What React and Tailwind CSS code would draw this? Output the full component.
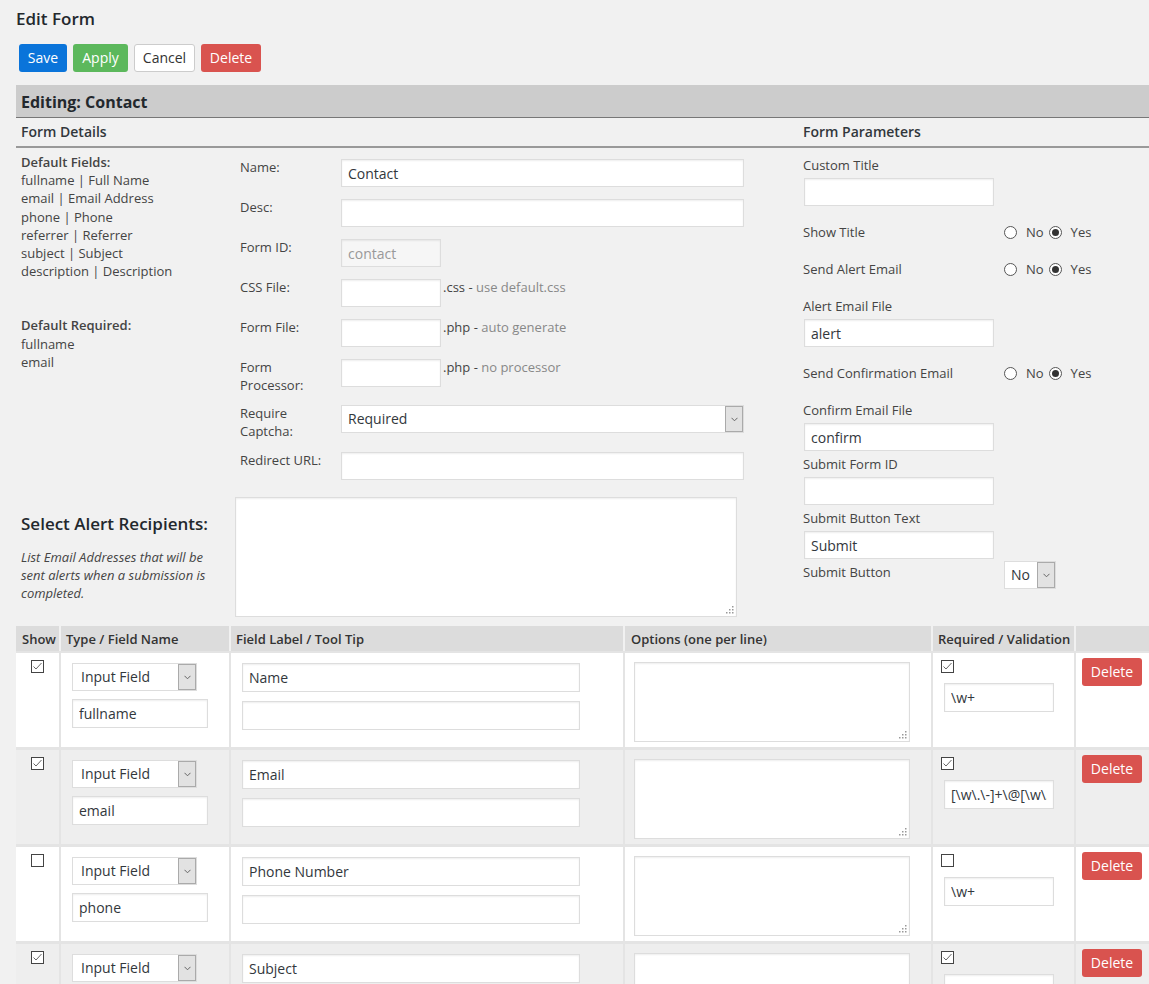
import React from "react";

function Check({ checked }) {
  return (
    <svg width="13" height="13" viewBox="0 0 13 13" className="block">
      <rect x="0.5" y="0.5" width="12" height="12" fill="#fff" stroke="#444" />
      {checked && (
        <path d="M2.5 6.5 L5 9 L10.5 3" fill="none" stroke="#666" strokeWidth="1" />
      )}
    </svg>
  );
}

function Radio({ checked }) {
  return (
    <svg width="13" height="13" viewBox="0 0 13 13" className="block">
      <circle cx="6.5" cy="6.5" r="6" fill="#fff" stroke="#555" />
      {checked && <circle cx="6.5" cy="6.5" r="3.5" fill="#333" />}
    </svg>
  );
}

function Chevron() {
  return (
    <svg width="7" height="5" viewBox="0 0 7 5" className="block">
      <path d="M0.5 0.8 L3.5 3.8 L6.5 0.8" fill="none" stroke="#666" strokeWidth="1" />
    </svg>
  );
}

function Input({ value = "", className = "", disabled = false }) {
  return (
    <input
      readOnly
      defaultValue={value}
      className={`block border border-[#dddddd] px-[6px] text-[14px] outline-none shadow-[inset_0_1px_2px_rgba(0,0,0,0.07)] ${
        disabled ? "bg-[#f6f6f6] text-[#999999]" : "bg-white text-[#32373c]"
      } ${className}`}
    />
  );
}

function Select({ value, className = "", text = "pl-[8px]" }) {
  return (
    <div className={`flex items-stretch border border-[#dddddd] bg-white ${className}`}>
      <div className={`flex flex-1 items-center ${text} text-[14px] text-[#32373c]`}>{value}</div>
      <div className="flex w-[18px] items-center justify-center border border-[#aaaaaa] bg-[#e2e2e2]">
        <Chevron />
      </div>
    </div>
  );
}

function Textarea({ className = "" }) {
  return (
    <div
      className={`relative border border-[#dddddd] bg-white shadow-[inset_0_1px_2px_rgba(0,0,0,0.07)] ${className}`}
    >
      <svg width="8" height="8" viewBox="0 0 8 8" className="absolute bottom-[2px] right-[2px]">
        <rect x="6" y="0" width="1.5" height="1.5" fill="#999" />
        <rect x="6" y="3" width="1.5" height="1.5" fill="#999" />
        <rect x="3" y="3" width="1.5" height="1.5" fill="#999" />
        <rect x="6" y="6" width="1.5" height="1.5" fill="#999" />
        <rect x="3" y="6" width="1.5" height="1.5" fill="#999" />
        <rect x="0" y="6" width="1.5" height="1.5" fill="#999" />
      </svg>
    </div>
  );
}

function FormRow({ label, h, children }) {
  return (
    <div className={`flex items-start ${h}`}>
      <div className="w-[101px] leading-[18px] -mt-[1px]">{label}</div>
      <div className="flex flex-1 items-start">{children}</div>
    </div>
  );
}

function RadioRow({ label, className = "" }) {
  return (
    <div className={`flex h-[18px] items-center ${className}`}>
      <div className="w-[201px]">{label}</div>
      <Radio />
      <span className="ml-[9px]">No</span>
      <span className="ml-[5px]">
        <Radio checked />
      </span>
      <span className="ml-[9px]">Yes</span>
    </div>
  );
}

const rows = [
  { show: true, name: "fullname", label: "Name", req: true, val: "\\w+", bg: "bg-white" },
  {
    show: true,
    name: "email",
    label: "Email",
    req: true,
    val: "[\\w\\.\\-]+\\@[\\w\\.\\-]+\\.\\w+",
    bg: "bg-[#eeeeee]",
  },
  { show: false, name: "phone", label: "Phone Number", req: false, val: "\\w+", bg: "bg-white" },
  { show: true, name: "subject", label: "Subject", req: true, val: "", bg: "bg-[#eeeeee]" },
];

export default function App() {
  return (
    <div className="min-h-screen overflow-hidden bg-[#f1f1f1] pb-6 pl-4 font-['Open_Sans',sans-serif] text-[13px] leading-[18px] text-[#444444]">
      <h1 className="pt-[7px] text-[17px] font-semibold leading-[24px] text-[#23282d]">Edit Form</h1>

      <div className="mt-[13px] flex gap-[6px] pl-[3px]">
        <button className="h-[28px] w-[48px] rounded-[3px] bg-[#0a74da] text-[14px] text-white">Save</button>
        <button className="h-[28px] w-[55px] rounded-[3px] bg-[#5cb85c] text-[14px] text-white">Apply</button>
        <button className="h-[28px] w-[61px] rounded-[3px] border border-[#cccccc] bg-white text-[14px] text-[#333]">
          Cancel
        </button>
        <button className="h-[28px] w-[60px] rounded-[3px] bg-[#d9534f] text-[14px] text-white">Delete</button>
      </div>

      <div className="mt-[13px] flex h-[33px] items-center border-b border-[#777777] bg-[#cccccc] pl-[5px] pt-[2px]">
        <span className="text-[16px] font-bold text-[#23282d]">Editing: Contact</span>
      </div>

      <div className="flex">
        {/* LEFT */}
        <div className="w-[764px]">
          <div className="flex h-[30px] items-center border-b-2 border-[#999999] pl-[5px] text-[14px] font-semibold text-[#32373c]">
            Form Details
          </div>
          <div className="flex">
            <div className="w-[224px] pl-[5px] pt-[5px] leading-[18.2px]">
              <div className="font-semibold">Default Fields:</div>
              <div>fullname | Full Name</div>
              <div>email | Email Address</div>
              <div>phone | Phone</div>
              <div>referrer | Referrer</div>
              <div>subject | Subject</div>
              <div>description | Description</div>
              <div className="mt-[36px] font-semibold">Default Required:</div>
              <div>fullname</div>
              <div>email</div>
            </div>
            <div className="w-[504px] pt-[11px]">
              <FormRow label="Name:" h="h-[40px]">
                <Input value="Contact" className="h-[28px] w-full" />
              </FormRow>
              <FormRow label="Desc:" h="h-[40px]">
                <Input className="h-[28px] w-full" />
              </FormRow>
              <FormRow label="Form ID:" h="h-[40px]">
                <Input value="contact" disabled className="h-[28px] w-[100px]" />
              </FormRow>
              <FormRow label="CSS File:" h="h-[40px]">
                <Input className="h-[28px] w-[100px]" />
                <span className="-mt-[1px] pl-[2px]">
                  .css - <span className="text-[#888888]">use default.css</span>
                </span>
              </FormRow>
              <FormRow label="Form File:" h="h-[40px]">
                <Input className="h-[28px] w-[100px]" />
                <span className="-mt-[1px] pl-[2px]">
                  .php - <span className="text-[#888888]">auto generate</span>
                </span>
              </FormRow>
              <FormRow
                label={
                  <>
                    Form
                    <br />
                    Processor:
                  </>
                }
                h="h-[46px]"
              >
                <Input className="h-[28px] w-[100px]" />
                <span className="-mt-[1px] pl-[2px]">
                  .php - <span className="text-[#888888]">no processor</span>
                </span>
              </FormRow>
              <FormRow
                label={
                  <>
                    Require
                    <br />
                    Captcha:
                  </>
                }
                h="h-[47px]"
              >
                <Select value="Required" className="h-[28px] w-full" text="pl-[6px]" />
              </FormRow>
              <FormRow label="Redirect URL:" h="h-[28px]">
                <Input className="h-[28px] w-full" />
              </FormRow>
            </div>
          </div>
          <div className="mt-[17px] flex">
            <div className="w-[219px] pl-[5px]">
              <div className="mt-[15px] text-[17px] font-semibold leading-[24px] text-[#23282d]">
                Select Alert Recipients:
              </div>
              <div className="mt-[12px] w-[192px] text-[13px] italic leading-[18px]">
                List Email Addresses that will be sent alerts when a submission is completed.
              </div>
            </div>
            <Textarea className="h-[120px] w-[502px]" />
          </div>
        </div>

        {/* RIGHT */}
        <div className="flex-1">
          <div className="flex h-[30px] items-center border-b-2 border-[#999999] pl-[23px] text-[14px] font-semibold text-[#32373c]">
            Form Parameters
          </div>
          <div className="pl-[23px] pt-[8px]">
            <div>Custom Title</div>
            <Input className="ml-[1px] mt-[4px] h-[28px] w-[190px]" />
            <RadioRow label="Show Title" className="mt-[17px]" />
            <RadioRow label="Send Alert Email" className="mt-[19px]" />
            <div className="mt-[19px]">Alert Email File</div>
            <Input value="alert" className="ml-[1px] mt-[4px] h-[28px] w-[190px]" />
            <RadioRow label="Send Confirmation Email" className="mt-[17px]" />
            <div className="mt-[19px]">Confirm Email File</div>
            <Input value="confirm" className="ml-[1px] mt-[4px] h-[28px] w-[190px]" />
            <div className="mt-[4px]">Submit Form ID</div>
            <Input className="ml-[1px] mt-[4px] h-[28px] w-[190px]" />
            <div className="mt-[4px]">Submit Button Text</div>
            <Input value="Submit" className="ml-[1px] mt-[4px] h-[28px] w-[190px]" />
            <div className="mt-[2px] flex items-start">
              <div className="w-[201px] pt-[2px]">Submit Button</div>
              <Select value="No" className="h-[28px] w-[52px]" text="pl-[6px]" />
            </div>
          </div>
        </div>
      </div>

      {/* TABLE */}
      <div className="mt-[9px]">
        <div className="flex h-[25px] gap-[2px] text-[13px] font-semibold text-[#333]">
          <div className="flex w-[43px] items-center bg-[#dcdcdc] pl-[6px]">Show</div>
          <div className="flex w-[168px] items-center bg-[#dcdcdc] pl-[5px]">Type / Field Name</div>
          <div className="flex w-[392px] items-center bg-[#dcdcdc] pl-[5px]">Field Label / Tool Tip</div>
          <div className="flex w-[306px] items-center bg-[#dcdcdc] pl-[6px]">Options (one per line)</div>
          <div className="flex w-[141px] items-center bg-[#dcdcdc] pl-[5px]">Required / Validation</div>
          <div className="flex-1 bg-[#dcdcdc]"></div>
        </div>
        <div className="flex flex-col gap-[3px] bg-[#e4e4e4] pt-[2px]">
          {rows.map((r, i) => (
            <div key={i} className="flex h-[94px] gap-[2px]">
              <div className={`${r.bg} w-[43px] pl-[15px] pt-[7px]`}>
                <Check checked={r.show} />
              </div>
              <div className={`${r.bg} w-[168px] pl-[11px] pt-[10px]`}>
                <Select value="Input Field" className="h-[28px] w-[125px]" />
                <Input value={r.name} className="mt-[8px] h-[29px] w-[136px] px-[4px]" />
              </div>
              <div className={`${r.bg} w-[392px] pl-[11px] pt-[10px]`}>
                <Input value={r.label} className="h-[29px] w-[338px] px-[4px]" />
                <Input className="mt-[9px] h-[29px] w-[338px]" />
              </div>
              <div className={`${r.bg} w-[306px] pl-[9px] pt-[9px]`}>
                <Textarea className="h-[80px] w-[276px]" />
              </div>
              <div className={`${r.bg} w-[141px] pl-[8px] pt-[7px]`}>
                <Check checked={r.req} />
                <Input value={r.val} className="ml-[3px] mt-[10px] h-[29px] w-[110px] px-[4px]" />
              </div>
              <div className={`${r.bg} flex-1 pl-[6px] pt-[5px]`}>
                <button className="h-[28px] w-[60px] rounded-[3px] bg-[#d9534f] text-[14px] text-white">
                  Delete
                </button>
              </div>
            </div>
          ))}
        </div>
      </div>
    </div>
  );
}
